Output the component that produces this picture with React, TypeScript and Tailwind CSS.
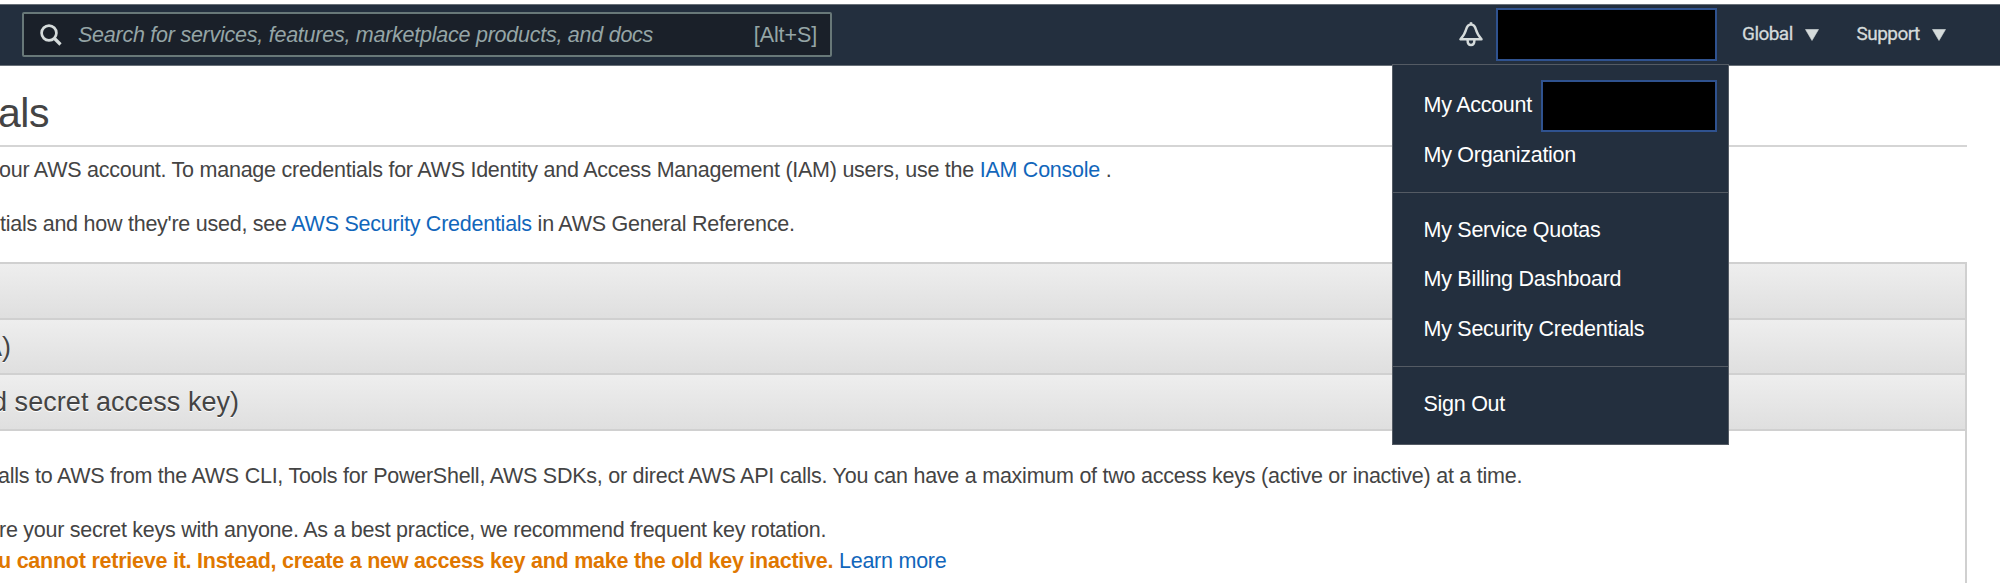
import React from "react";

const link = "text-[#1166bb]";

function SearchBox() {
  return (
    <div className="ml-[22px] flex h-[45px] w-[810px] items-center rounded-[2px] border-2 border-[#687878] bg-[#1a2029] text-[21.5px] tracking-[-0.25px] text-[#95a5a6]">
      <svg className="ml-4 h-[22px] w-[22px] shrink-0" viewBox="0 0 22 22" fill="none" stroke="#d5dbdb">
        <circle cx="9" cy="9" r="7.4" strokeWidth="2.7" />
        <path d="M14 14 L20.5 20.5" strokeWidth="3.2" />
      </svg>
      <span className="ml-4 whitespace-nowrap pt-[2px] italic">Search for services, features, marketplace products, and docs</span>
      <span className="ml-auto mr-[13px] pt-[2px] tracking-[-0.1px]">[Alt+S]</span>
    </div>
  );
}

function Bell() {
  return (
    <svg className="h-[25px] w-[24px]" viewBox="0 0 24 25" fill="none" stroke="#d5dbdb" strokeWidth="2.5" strokeLinejoin="round">
      <path d="M12 2.6C9 2.6 7.8 4.800 7 7.800C5.900 12 4.200 14 1.500 17.300H22.500C19.800 14 18.100 12 17 7.800C16.200 4.800 15 2.600 12 2.600Z" />
      <path d="M12 0.200V3" />
      <path d="M8.600 18C8.600 24.800 15.400 24.800 15.400 18" />
    </svg>
  );
}

function Caret() {
  return (
    <svg className="h-[12px] w-[14px]" viewBox="0 0 14 12" fill="#d5dbdb">
      <path d="M0.500 0.500H13.500L7 11.500Z" stroke="#d5dbdb" strokeWidth="0.6" strokeLinejoin="round" />
    </svg>
  );
}

function NavItem({ label }: { label: string }) {
  return (
    <div className="flex items-center font-['Roboto',sans-serif] text-[19px] tracking-[-0.55px] text-[#d5dbdb] [-webkit-text-stroke:0.3px_#d5dbdb]">
      {label}
      <span className="ml-[12px]"><Caret /></span>
    </div>
  );
}

function AccountMenu() {
  const item = "h-[49.6px] whitespace-nowrap leading-[49.6px]";
  return (
    <div className="absolute left-[1392px] top-[64px] h-[381px] w-[337px] border border-[#545b64] bg-[#232f3e] text-[21.5px] tracking-[-0.27px] text-white">
      <div className="h-[127px] pl-[30.5px] pt-[16px]">
        <div className={item + " flex items-center"}>
          <span className="w-[117.5px]">My Account</span>
          <div className="h-[52px] w-[176px] shrink-0 border-2 border-[#2f528f] bg-black" />
        </div>
        <div className={item}>My Organization</div>
      </div>
      <div className="h-[174px] border-t border-[#545b64] pl-[30.5px] pt-[12.6px]">
        <div className={item}>My Service Quotas</div>
        <div className={item}>My Billing Dashboard</div>
        <div className={item}>My Security Credentials</div>
      </div>
      <div className="border-t border-[#545b64] pl-[30.5px] pt-[13px]">
        <div className={item}>Sign Out</div>
      </div>
    </div>
  );
}

function Section({ children }: { children?: React.ReactNode }) {
  return (
    <div className="h-[55.5px] overflow-hidden whitespace-nowrap border-b-2 border-[#d0d0d0] bg-linear-to-b from-[#eeeeee] to-[#dfdfdf] text-[27px] leading-[55px] tracking-[0.05px] [text-shadow:0_1px_0_#fff]">
      {children}
    </div>
  );
}

export default function App() {
  return (
    <div className="relative h-[583px] w-[2000px] overflow-hidden bg-white pt-1 font-['Liberation_Sans',Arial,sans-serif] text-[21.5px] tracking-[-0.25px] text-[#444444]">
      <header className="flex h-[62px] items-center border-b border-t border-[#687078] bg-[#232f3e] pb-px">
        <SearchBox />
        <div className="ml-[627px]"><Bell /></div>
        <div className="ml-[13px] h-[53px] w-[221px] border-2 border-[#2f528f] bg-black" />
        <div className="ml-[25px] w-[114.5px]"><NavItem label="Global" /></div>
        <NavItem label="Support" />
      </header>
      <main className="w-[1967px] whitespace-nowrap">
        <h1 className="-ml-[2px] h-[79px] pt-[23px] text-[41px] leading-[48px] tracking-[-0.5px]">als</h1>
        <div className="h-[117px] border-t-2 border-[#d5d5d5] pt-[8px]">
          <p className="-ml-px h-[54px] leading-[30px]">our AWS account. To manage credentials for AWS Identity and Access Management (IAM) users, use the <a className={link}>IAM Console</a> .</p>
          <p className="leading-[30px]">tials and how they're used, see <a className={link}>AWS Security Credentials</a> in AWS General Reference.</p>
        </div>
        <div className="h-[330px] border-r-2 border-t-2 border-[#d0d0d0]">
          <Section />
          <Section><span className="-ml-[16px]">A)</span></Section>
          <Section><span className="-ml-[8px]">d secret access key)</span></Section>
          <div className="pt-[30px] leading-[30px]">
            <p className="-ml-[2px] h-[54px]">alls to AWS from the AWS CLI, Tools for PowerShell, AWS SDKs, or direct AWS API calls. You can have a maximum of two access keys (active or inactive) at a time.</p>
            <p className="-ml-[1px] h-[31px] tracking-[-0.27px]">re your secret keys with anyone. As a best practice, we recommend frequent key rotation.</p>
            <p className="-ml-[2px] tracking-[-0.24px]"><b className="text-[#e07700]">u cannot retrieve it. Instead, create a new access key and make the old key inactive.</b> <a className={link}>Learn more</a></p>
          </div>
        </div>
      </main>
      <AccountMenu />
    </div>
  );
}
